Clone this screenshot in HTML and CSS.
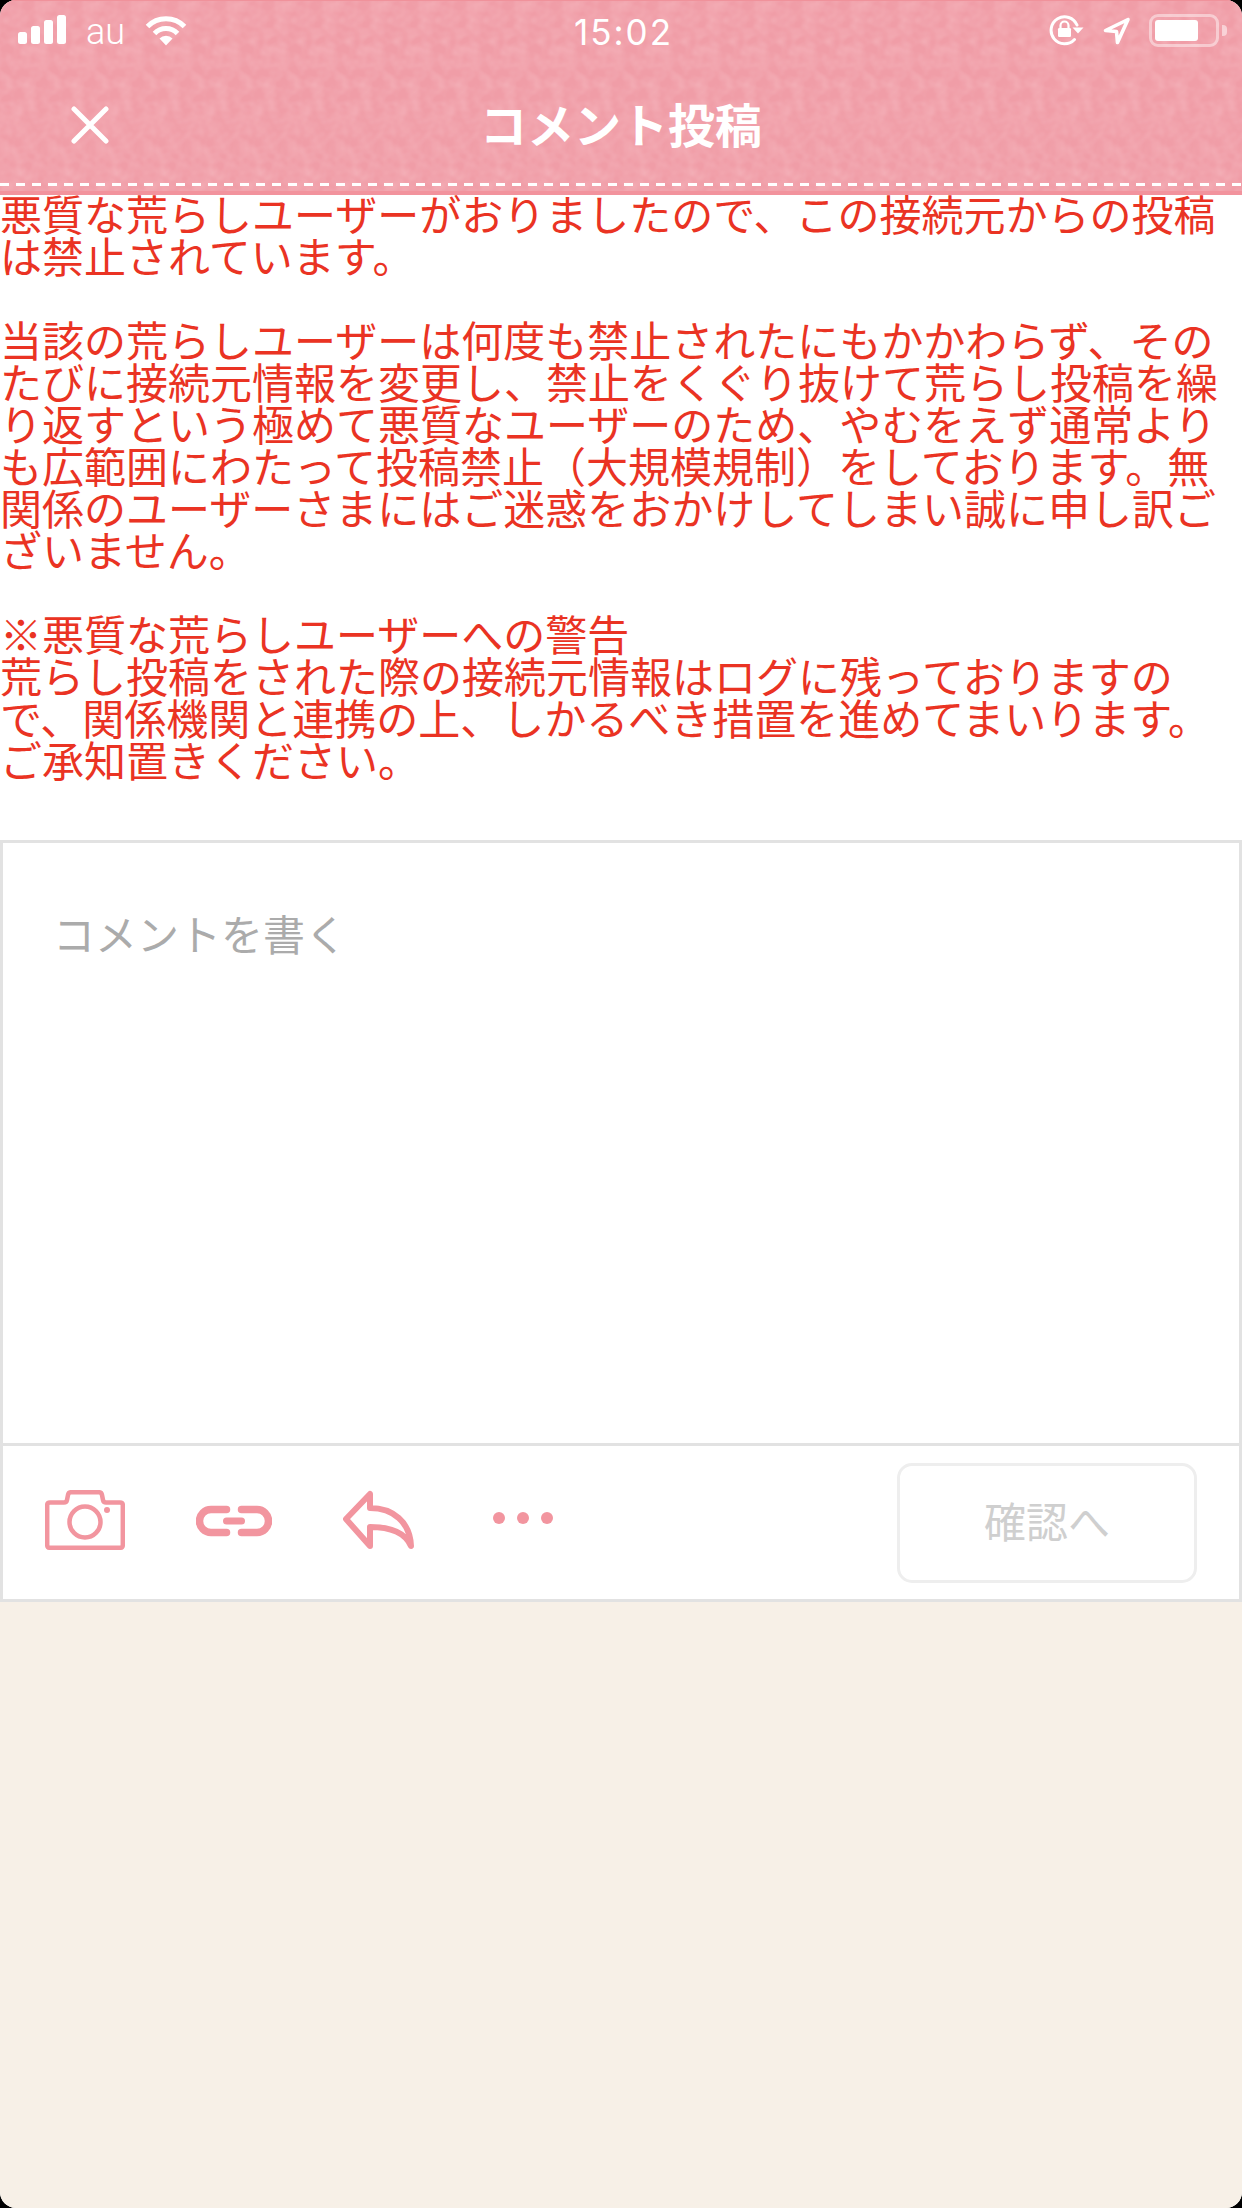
FILE: index.html
```html
<!DOCTYPE html>
<html lang="ja">
<head>
<meta charset="utf-8">
<title>コメント投稿</title>
<link rel="stylesheet" href="styles.css">
</head>
<body>
<div class="screen">
  <header class="app-header">
    <div class="status">
      <div class="status-left">
        <svg class="signal" width="48" height="30" viewBox="0 0 48 30" fill="#fff">
          <rect x="0" y="17" width="9" height="12" rx="2.5"/>
          <rect x="13" y="11" width="9" height="18" rx="2.5"/>
          <rect x="26" y="5" width="9" height="24" rx="2.5"/>
          <rect x="39" y="0" width="9" height="29" rx="2.5"/>
        </svg>
        <span class="carrier">au</span>
        <svg class="wifi" width="42" height="30" viewBox="0 0 42 30" fill="none" stroke="#fff">
          <path d="M2.5 10.5A26 26 0 0 1 39.5 10.5" stroke-width="5"/>
          <path d="M9.5 17.5A16 16 0 0 1 32.5 17.5" stroke-width="5"/>
          <path d="M21 29.5L14.5 22.5A9 9 0 0 1 27.5 22.5Z" fill="#fff" stroke="none"/>
        </svg>
      </div>
      <div class="time">15:02</div>
      <div class="status-right">
        <svg class="rotlock" width="36" height="32" viewBox="0 0 36 32" fill="none">
          <path d="M25.5 25.5A13.5 13.5 0 1 1 28 11" stroke="#fff" stroke-width="3" stroke-linecap="round"/>
          <path d="M23.5 13.5H34.5L29 19.5Z" fill="#fff"/>
          <rect x="9" y="14" width="13" height="9" rx="1.2" fill="#fff"/>
          <path d="M11.5 14.5V11.5A4 4 0 0 1 19.5 11.5V14.5" stroke="#fff" stroke-width="2.2"/>
        </svg>
        <svg class="locate" width="28" height="28" viewBox="0 0 28 28" fill="none">
          <path d="M25 2.5L2.5 13.5L13.5 14.5L14.5 25.5Z" stroke="#fff" stroke-width="3.6" stroke-linejoin="round"/>
        </svg>
        <div class="battery">
          <div class="battery-body"><div class="battery-level"></div></div>
          <div class="battery-nub"></div>
        </div>
      </div>
    </div>
    <div class="nav">
      <button class="close" aria-label="閉じる">
        <svg width="38" height="38" viewBox="0 0 38 38" fill="none" stroke="#fff" stroke-width="5" stroke-linecap="round">
          <path d="M3 3L35 35M35 3L3 35"/>
        </svg>
      </button>
      <h1 class="title">コメント投稿</h1>
    </div>
    <div class="stitch"></div>
  </header>

  <main class="notice">
    <p>悪質な荒らしユーザーがおりましたので、この接続元からの投稿は禁止されています。</p>
    <p>当該の荒らしユーザーは何度も禁止されたにもかかわらず、そのたびに接続元情報を変更し、禁止をくぐり抜けて荒らし投稿を繰り返すという極めて悪質なユーザーのため、やむをえず通常よりも広範囲にわたって投稿禁止（大規模規制）をしております。無関係のユーザーさまにはご迷惑をおかけしてしまい誠に申し訳ございません。</p>
    <p>※悪質な荒らしユーザーへの警告<br>荒らし投稿をされた際の接続元情報はログに残っておりますので、関係機関と連携の上、しかるべき措置を進めてまいります。ご承知置きください。</p>
  </main>

  <section class="composer">
    <div class="input-area"><span class="placeholder">コメントを書く</span></div>
    <div class="toolbar">
      <div class="tools">
        <svg width="80" height="60" viewBox="0 0 80 60" fill="none" stroke="#f2959f" stroke-width="4.5" stroke-linejoin="round">
          <path d="M5 12.5H19Q21.5 12.5 22 10L23 5Q23.5 2.2 26 2.2H54Q56.5 2.2 57 5L58 10Q58.5 12.5 61 12.5H75Q77.8 12.5 77.8 15V55Q77.8 57.8 75 57.8H5Q2.2 57.8 2.2 55V15Q2.2 12.5 5 12.5Z"/>
          <circle cx="40" cy="32" r="15.5"/>
          <circle cx="62" cy="20" r="3" fill="#f2959f" stroke="none"/>
        </svg>
        <svg width="76" height="60" viewBox="0 0 76 60" fill="none" stroke="#f2959f" stroke-linecap="round">
          <path d="M30.5 19.5H15A11.5 11.5 0 0 0 15 42.5H30.5" stroke-width="7.5"/>
          <path d="M45.5 19.5H61A11.5 11.5 0 0 1 61 42.5H45.5" stroke-width="7.5"/>
          <path d="M30.5 31H45.5" stroke-width="7"/>
        </svg>
        <svg width="74" height="60" viewBox="0 0 74 60" fill="none" stroke="#f2959f" stroke-width="6" stroke-linejoin="round">
          <path d="M27 4V18C50 18 67 32 68 56C62 42 48 37 27 37V56L3 29Z"/>
        </svg>
        <svg width="60" height="60" viewBox="0 0 60 60" fill="#f2959f">
          <circle cx="6" cy="28" r="6"/>
          <circle cx="30" cy="28" r="6"/>
          <circle cx="54" cy="28" r="6"/>
        </svg>
      </div>
      <button class="confirm">確認へ</button>
    </div>
  </section>

  <div class="filler"></div>
</div>
</body>
</html>
```

FILE: styles.css
```css
* { box-sizing: border-box; }

html, body {
  margin: 0;
  padding: 0;
  background: #000;
}

.screen {
  width: 1242px;
  height: 2208px;
  display: flex;
  flex-direction: column;
  background: #fff;
  border-radius: 16px;
  overflow: hidden;
  font-family: "Noto Sans CJK JP", "Noto Sans", sans-serif;
}

.app-header {
  flex: none;
  height: 195px;
  border-top: 1px solid #f0929b;
  border-bottom: 4px solid #f2939d;
  background-color: #f09da7;
  background-image: url("data:image/svg+xml,%3Csvg xmlns='http://www.w3.org/2000/svg' width='48' height='190'%3E%3Cfilter id='n' x='0' y='0' width='100%25' height='100%25'%3E%3CfeTurbulence type='fractalNoise' baseFrequency='0.09' numOctaves='2' seed='4' stitchTiles='stitch'/%3E%3CfeColorMatrix values='0 0 0 0 1 0 0 0 0 0.76 0 0 0 0 0.78 0.4 0 0 0 -0.12'/%3E%3C/filter%3E%3Crect width='48' height='190' filter='url(%23n)'/%3E%3C/svg%3E");
  background-repeat: repeat;
}

.status {
  height: 59px;
  padding-top: 13px;
  display: grid;
  grid-template-columns: 1fr auto 1fr;
  align-items: start;
  color: #fff;
}

.status-left {
  display: flex;
  align-items: flex-start;
  padding-left: 18px;
}

.signal { margin-top: 1px; }

.carrier {
  margin-left: 20px;
  font-family: Roboto, "Liberation Sans", sans-serif;
  font-weight: 300;
  font-size: 36px;
  line-height: 36px;
}

.wifi {
  margin-left: 20px;
  margin-top: 2px;
}

.time {
  margin-left: 5px;
  font-family: Inter, "Liberation Sans", sans-serif;
  font-weight: 400;
  font-size: 35px;
  line-height: 36px;
  letter-spacing: 2px;
}

.status-right {
  display: flex;
  justify-content: flex-end;
  align-items: flex-start;
  padding-right: 15px;
}

.rotlock { margin-right: 18px; }
.locate { margin-top: 3px; margin-right: 18px; }

.battery {
  display: flex;
  align-items: center;
  gap: 3px;
}

.battery-body {
  width: 70px;
  height: 33px;
  padding: 3px;
  border: 3px solid rgba(255, 255, 255, 0.45);
  border-radius: 9px;
}

.battery-level {
  width: 43px;
  height: 21px;
  background: #fff;
  border-radius: 3px;
}

.battery-nub {
  width: 5px;
  height: 11px;
  background: rgba(255, 255, 255, 0.5);
  border-radius: 0 4px 4px 0;
}

.nav {
  height: 123px;
  position: relative;
  display: flex;
  align-items: center;
  justify-content: center;
  padding-top: 2px;
}

.close {
  position: absolute;
  left: 71px;
  top: 46px;
  padding: 0;
  border: 0;
  background: none;
  line-height: 0;
}

.title {
  margin: 0;
  color: #fff;
  font-size: 47px;
  line-height: 60px;
  font-weight: 700;
}

.stitch {
  height: 3px;
  background-image: repeating-linear-gradient(to right, #fff 0, #fff 9px, transparent 9px, transparent 16px);
}

.notice {
  flex: none;
  height: 633px;
  margin-top: -3px;
  margin-bottom: 15px;
  color: #ea3323;
  font-size: 42px;
  line-height: 42px;
}

.notice p {
  margin: 0 0 42px;
}

.composer {
  flex: none;
  border: 3px solid #e2e2e2;
  background: #fff;
}

.input-area {
  height: 600px;
  padding: 69px 0 0 50px;
}

.placeholder {
  display: block;
  color: #ababab;
  font-size: 42px;
  line-height: 42px;
}

.toolbar {
  height: 156px;
  border-top: 3px solid #e2e2e2;
  padding: 0 42px;
  display: flex;
  align-items: center;
  justify-content: space-between;
}

.tools {
  display: flex;
  align-items: center;
  margin-bottom: 5px;
}

.tools svg:nth-child(1) { margin-right: 71px; }
.tools svg:nth-child(2) { margin-right: 71px; }
.tools svg:nth-child(3) { margin-right: 76px; }

.confirm {
  width: 300px;
  height: 120px;
  border: 3px solid #eeeeee;
  border-radius: 15px;
  background: #fff;
  color: #cfcfcf;
  font-family: inherit;
  font-size: 42px;
  line-height: 42px;
  padding: 0 0 5px;
}

.filler {
  flex: 1;
  background: #f7f0e7;
}
```
